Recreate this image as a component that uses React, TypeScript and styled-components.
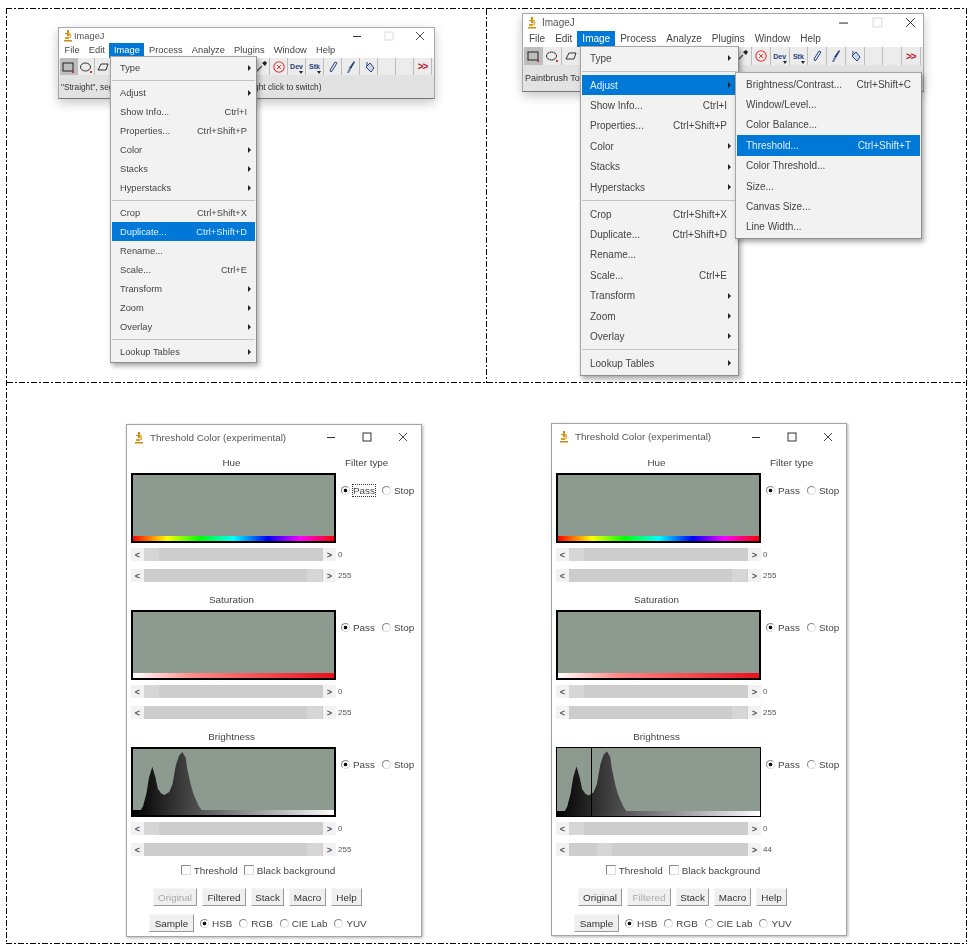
import React from 'react'
import styled, { createGlobalStyle, css } from 'styled-components'

const GlobalStyle = createGlobalStyle`
  html, body {
    margin: 0;
    padding: 0;
    background: #fff;
  }
  body {
    font-family: "Liberation Sans", Arial, sans-serif;
    color: #333;
  }
`

const dashH = 'repeating-linear-gradient(90deg,#000 0 6px,transparent 6px 8px,#000 8px 10px,transparent 10px 12px)'
const dashV = 'repeating-linear-gradient(180deg,#000 0 6px,transparent 6px 8px,#000 8px 10px,transparent 10px 12px)'

// dash-dot rules, the scanned table borders are not plain css dashes
const ruleBottom = css`
  background-image: ${dashH};
  background-size: 100% 1px;
  background-position: left bottom;
  background-repeat: no-repeat;
`

const Page = styled.div`
  width: 976px;
  height: 946px;
  padding: 8px 0 0 6px;
  box-sizing: border-box;
  overflow: hidden;
`
const Sheet = styled.div`
  width: 961px;
  height: 936px;
  box-sizing: border-box;
  padding: 1px;
  background-image: ${dashH}, ${dashH}, ${dashV}, ${dashV};
  background-size: 100% 1px, 100% 1px, 1px 100%, 1px 100%;
  background-position: left top, left bottom, left top, right top;
  background-repeat: no-repeat;
  display: grid;
  grid-template-columns: 480px 1fr;
  grid-template-rows: 374px 1fr;
`
const TopCell = styled.div<{ $left: number; $top: number; $divider?: boolean }>`
  padding: ${p => p.$top}px 0 0 ${p => p.$left}px;
  ${ruleBottom}
  ${p =>
    p.$divider &&
    css`
      background-image: ${dashH}, ${dashV};
      background-size: 100% 1px, 1px 100%;
      background-position: left bottom, right top;
    `}
`
const BottomCell = styled.div`
  grid-column: 1 / 3;
  display: flex;
  align-items: flex-start;
  gap: 129px;
  padding: 40px 0 0 119px;
`

/* ImageJ main window */
const MainWindow = styled.div<{ $w: number; $h: number; $font: number }>`
  position: relative;
  width: ${p => p.$w}px;
  height: ${p => p.$h}px;
  font-size: ${p => p.$font}px;
  box-sizing: border-box;
  background: #fff;
  border: 1px solid #a8a8a8;
  border-bottom-color: #777;
  box-shadow: 0 4px 10px rgba(0, 0, 0, 0.22);
  display: flex;
  flex-direction: column;
  filter: blur(0.3px);
`
const TitleBar = styled.div<{ $h: number; $gap: number }>`
  height: ${p => p.$h}px;
  flex: none;
  display: flex;
  align-items: center;
  padding-left: 3px;
  gap: ${p => p.$gap}px;
  color: #555;
`
const TitleText = styled.span`
  flex: 1;
`
const WinControls = styled.div<{ $w: number; $pad: number }>`
  width: ${p => p.$w}px;
  box-sizing: border-box;
  display: flex;
  justify-content: space-between;
  align-items: center;
  padding-right: ${p => p.$pad}px;
  flex: none;
`
const MenuBar = styled.div<{ $h: number; $pad: number }>`
  height: ${p => p.$h}px;
  flex: none;
  display: flex;
  align-items: center;
  padding-left: 1px;
  & > span {
    padding: 0 ${p => p.$pad}px;
    line-height: ${p => p.$h}px;
  }
`
const MenuTitle = styled.span<{ $active?: boolean }>`
  background: ${p => (p.$active ? '#0078d7' : 'transparent')};
  color: ${p => (p.$active ? '#fff' : '#444')};
`
const Toolbar = styled.div<{ $h: number }>`
  height: ${p => p.$h}px;
  flex: none;
  background: #eaeaea;
  display: flex;
  padding-left: 1px;
`
const ToolButton = styled.div<{ $w: number; $pressed?: boolean }>`
  position: relative;
  width: ${p => p.$w}px;
  box-sizing: border-box;
  flex: none;
  background: ${p => (p.$pressed ? '#bdbdbd' : '#ececec')};
  border-right: 1px solid #bcbcbc;
  display: flex;
  align-items: center;
  justify-content: center;
  font-size: 7px;
  font-weight: bold;
  color: #26407c;
`
const DropMark = styled.i`
  position: absolute;
  right: 2px;
  bottom: 1px;
  border-top: 3px solid #222;
  border-left: 2px solid transparent;
  border-right: 2px solid transparent;
`
const ExpandMark = styled.span`
  color: #c0202a;
  font-size: 10px;
  letter-spacing: -1px;
`
const StatusBar = styled.div<{ $font: number }>`
  flex: 1;
  background: #e2e2e2;
  display: flex;
  align-items: center;
  padding-left: 2px;
  font-size: ${p => p.$font}px;
  color: #333;
  white-space: nowrap;
  overflow: hidden;
`

/* Drop-down menus */
const Menu = styled.div<{ $x: number; $y: number; $w: number }>`
  position: absolute;
  left: ${p => p.$x}px;
  top: ${p => p.$y}px;
  width: ${p => p.$w}px;
  box-sizing: border-box;
  padding: 1px;
  background: #f2f2f2;
  border: 1px solid #a6a6a6;
  border-right-color: #8c8c8c;
  border-bottom-color: #8c8c8c;
  box-shadow: 2px 3px 5px rgba(0, 0, 0, 0.35);
  z-index: 2;
`
const MenuRow = styled.div<{ $h: number; $active?: boolean; $inset: number; $lead: number }>`
  height: ${p => p.$h}px;
  display: flex;
  align-items: center;
  justify-content: space-between;
  padding: 0 ${p => p.$inset}px 0 ${p => p.$lead}px;
  background: ${p => (p.$active ? '#0078d7' : 'transparent')};
  color: ${p => (p.$active ? '#dff0ff' : '#444')};
  white-space: nowrap;
`
const MenuSep = styled.div<{ $h: number }>`
  height: ${p => p.$h}px;
  display: flex;
  align-items: center;
  &::before {
    content: '';
    flex: 1;
    height: 1px;
    background: #c4c4c4;
  }
`
const Arrow = styled.span`
  width: 0;
  height: 0;
  margin-right: -4px;
  border-left: 3px solid #222;
  border-top: 3px solid transparent;
  border-bottom: 3px solid transparent;
`

/* Threshold Color window */
const ThresholdWin = styled.div<{ $mt?: number }>`
  width: 296px;
  height: 513px;
  margin-top: ${p => p.$mt || 0}px;
  box-sizing: border-box;
  padding: 0 0 0 4px;
  flex: none;
  background: #fff;
  border: 1px solid #a4a4a4;
  box-shadow: 1px 1px 3px rgba(0, 0, 0, 0.3);
  font-size: 9.9px;
  color: #444;
  filter: blur(0.3px);
`
const ThresholdTitle = styled.div<{ $h: number }>`
  height: ${p => p.$h}px;
  display: flex;
  align-items: center;
  gap: 6px;
  padding-left: 2px;
  font-size: 9.9px;
  color: #555;
`
const Section = styled.section`
  display: grid;
  grid-template-columns: 205px 1fr;
  margin-bottom: 9px;
  &:first-of-type {
    padding-top: 5px;
  }
`
const Caption = styled.div`
  height: 19px;
  line-height: 18px;
  text-align: center;
  padding-right: 4px;
  box-sizing: border-box;
`
const FilterLabel = styled(Caption)`
  text-align: left;
  padding: 0 0 0 9px;
`
const RadioColumn = styled.div`
  grid-row: 2;
  grid-column: 2;
  padding: 10px 0 0 5px;
  display: flex;
  gap: 7px;
  height: 14px;
  align-items: center;
`
const Controls = styled.div`
  grid-column: 1;
`
const Plot = styled.div<{ $thin?: boolean }>`
  position: relative;
  height: 70px;
  box-sizing: border-box;
  border: ${p => (p.$thin ? '1px' : '2px')} solid #000;
  background: #8d9a8f;
  display: flex;
  flex-direction: column;
  justify-content: flex-end;
`
const Ramp = styled.div<{ $ramp: string }>`
  height: 5px;
  background: ${p => p.$ramp};
`
const HistogramSvg = styled.svg`
  position: absolute;
  left: 0;
  top: 0;
  width: 100%;
  height: calc(100% - 5px);
`
const Cursor = styled.div`
  position: absolute;
  top: 0;
  bottom: 0;
  left: 34px;
  width: 1px;
  background: #000;
`
const ScrollRow = styled.div`
  position: relative;
  height: 13px;
  margin-top: 8px;
  display: flex;
  align-items: center;
  background: #f2f2f2;
  color: #555;
  font-size: 9px;
  ${Plot} + & {
    margin-top: 5px;
  }
`
const ScrollArrow = styled.span`
  width: 13px;
  flex: none;
  text-align: center;
  font-size: 9px;
  font-weight: bold;
`
const Track = styled.div`
  position: relative;
  flex: 1;
  height: 100%;
  background: #cdcdcd;
`
const Thumb = styled.div`
  position: absolute;
  top: 0;
  bottom: 0;
  background: #d6d6d6;
`
const ScrollValue = styled.span`
  position: absolute;
  left: 207px;
  top: 2px;
  font-size: 8px;
`
const RadioLabel = styled.label<{ $focus?: boolean }>`
  display: inline-flex;
  align-items: center;
  gap: 3px;
  white-space: nowrap;
  & > span {
    outline: ${p => (p.$focus ? '1px dotted #333' : 'none')};
  }
`
const RadioDot = styled.i<{ $on?: boolean }>`
  width: 9px;
  height: 9px;
  box-sizing: border-box;
  border-radius: 50%;
  border: 1px solid #dcdcdc;
  border-top-color: #8a8a8a;
  border-left-color: #8a8a8a;
  background: ${p => (p.$on ? 'radial-gradient(circle, #111 0 1.5px, #fff 2.2px)' : '#fff')};
  flex: none;
`
const CheckRow = styled.div`
  height: 14px;
  display: flex;
  justify-content: center;
  align-items: center;
  gap: 6px;
  margin-top: -2px;
  padding-right: 36px;
`
const CheckLabel = styled.label`
  display: inline-flex;
  align-items: center;
  gap: 3px;
`
const CheckBox = styled.i`
  width: 10px;
  height: 10px;
  box-sizing: border-box;
  background: #fff;
  border: 1px solid #8a8a8a;
  border-right-color: #ddd;
  border-bottom-color: #ddd;
`
const ButtonRow = styled.div`
  display: flex;
  gap: 5px;
  margin-top: 11px;
  padding-left: 22px;
`
const ActionButton = styled.button<{ $w: number; $off?: boolean }>`
  width: ${p => p.$w}px;
  height: 18px;
  padding: 0;
  font: inherit;
  color: ${p => (p.$off ? '#aaa' : '#333')};
  background: #efefef;
  border: 1px solid #f6f6f6;
  border-right-color: #999;
  border-bottom-color: #999;
`
const SampleRow = styled.div`
  display: flex;
  align-items: center;
  gap: 6px;
  margin-top: 8px;
  padding-left: 18px;
`
const ColorModes = styled.div`
  display: flex;
  gap: 7px;
`

const Logo = () => (
  <svg width="11" height="13" viewBox="0 0 11 13">
    <path d="M5 1h2v6H5zM3 4h2v1H3zM2 11h8v1.5H2z" fill="#c98a1a" />
    <path d="M7 3c2 1 3 3 2 6H7c1-2 0-4-1-5z" fill="#e8b84a" />
    <path d="M3 8h4v2H3z" fill="#e39a22" />
  </svg>
)

const WinIcons = ({ dim, size }: { dim?: boolean; size: number }) => (
  <>
    <svg width={size} height={size} viewBox="0 0 10 10"><path d="M1 5.5h8" stroke="#333" strokeWidth="1" /></svg>
    <svg width={size} height={size} viewBox="0 0 10 10"><rect x="1" y="1" width="8" height="8" fill="none" stroke={dim ? '#ddd' : '#333'} /></svg>
    <svg width={size} height={size} viewBox="0 0 10 10"><path d="M1 1l8 8M9 1l-8 8" stroke="#333" strokeWidth="0.9" /></svg>
  </>
)

const iconFor = (i: number): React.ReactNode => {
  switch (i) {
    case 0:
      return <svg width="14" height="14" viewBox="0 0 14 14"><rect x="2" y="3" width="10" height="8" fill="none" stroke="#222" /><rect x="11" y="11" width="2" height="2" fill="#c33" /></svg>
    case 1:
      return <svg width="14" height="14" viewBox="0 0 14 14"><ellipse cx="6.5" cy="7" rx="5" ry="4" fill="none" stroke="#333" /><rect x="11" y="11" width="2" height="2" fill="#c33" /></svg>
    case 2:
      return <svg width="14" height="14" viewBox="0 0 14 14"><path d="M2 10l3-6h7l-2 6z" fill="none" stroke="#333" /></svg>
    case 11:
      return <svg width="14" height="14" viewBox="0 0 14 14"><path d="M2 12l6-6" stroke="#555" strokeWidth="1.5" /><path d="M8 3l3 3 2-3-2-2z" fill="#222" /></svg>
    case 12:
      return <svg width="14" height="14" viewBox="0 0 14 14"><circle cx="7" cy="7" r="5.2" fill="#fbe9e9" stroke="#d2413c" strokeWidth="1.1" /><path d="M5 5l4 4M9 5l-4 4" stroke="#d2413c" /></svg>
    case 13:
      return <>Dev<DropMark /></>
    case 14:
      return <>Stk<DropMark /></>
    case 15:
      return <svg width="14" height="14" viewBox="0 0 14 14"><path d="M5 12l-1-2 5-8 2 1-5 8z" fill="#dfe8f5" stroke="#26407c" /></svg>
    case 16:
      return <svg width="14" height="14" viewBox="0 0 14 14"><path d="M10 1l1 1-4 7-2-1z" fill="#26407c" /><path d="M5 8l2 1-2 4-2 0z" fill="#6b7fa8" /></svg>
    case 17:
      return <svg width="14" height="14" viewBox="0 0 14 14"><path d="M4 7l4-4 4 5-3 4z" fill="#cdd8ec" stroke="#26407c" /><path d="M5 2v4" stroke="#26407c" /></svg>
    case 20:
      return <ExpandMark>&gt;&gt;</ExpandMark>
    default:
      return null
  }
}

type Entry = { label?: string; keys?: string; more?: boolean; active?: boolean }

const imageMenu = (activeLabel: string): Entry[] =>
  [
    { label: 'Type', more: true },
    {},
    { label: 'Adjust', more: true },
    { label: 'Show Info...', keys: 'Ctrl+I' },
    { label: 'Properties...', keys: 'Ctrl+Shift+P' },
    { label: 'Color', more: true },
    { label: 'Stacks', more: true },
    { label: 'Hyperstacks', more: true },
    {},
    { label: 'Crop', keys: 'Ctrl+Shift+X' },
    { label: 'Duplicate...', keys: 'Ctrl+Shift+D' },
    { label: 'Rename...' },
    { label: 'Scale...', keys: 'Ctrl+E' },
    { label: 'Transform', more: true },
    { label: 'Zoom', more: true },
    { label: 'Overlay', more: true },
    {},
    { label: 'Lookup Tables', more: true },
  ].map(e => ({ ...e, active: e.label === activeLabel }))

const adjustMenu: Entry[] = [
  { label: 'Brightness/Contrast...', keys: 'Ctrl+Shift+C' },
  { label: 'Window/Level...' },
  { label: 'Color Balance...' },
  { label: 'Threshold...', keys: 'Ctrl+Shift+T', active: true },
  { label: 'Color Threshold...' },
  { label: 'Size...' },
  { label: 'Canvas Size...' },
  { label: 'Line Width...' },
]

const DropMenu = ({ entries, x, y, w, row, sep, inset, lead = 8 }: { entries: Entry[]; x: number; y: number; w: number; row: number; sep: number; inset: number; lead?: number }) => (
  <Menu $x={x} $y={y} $w={w}>
    {entries.map((e, i) =>
      e.label ? (
        <MenuRow key={i} $h={row} $active={e.active} $inset={inset} $lead={lead}>
          <span>{e.label}</span>
          {e.keys && <span>{e.keys}</span>}
          {e.more && <Arrow />}
        </MenuRow>
      ) : (
        <MenuSep key={i} $h={sep} />
      ),
    )}
  </Menu>
)

const menuNames = ['File', 'Edit', 'Image', 'Process', 'Analyze', 'Plugins', 'Window', 'Help']

const ImageJWindow = ({ big, status, children }: { big?: boolean; status: string; children: React.ReactNode }) => {
  // the first twelve buttons are a little narrower than the ones after the dropper
  const toolWidth = (i: number) => (big ? (i < 12 ? 19 : 18.75) : i < 12 ? 17.5 : 18)
  return (
    <MainWindow $w={big ? 402 : 377} $h={big ? 79 : 72} $font={big ? 10 : 9.3}>
      <TitleBar $h={big ? 17 : 15} $gap={big ? 5 : 1}>
        <Logo />
        <TitleText>ImageJ</TitleText>
        <WinControls $w={big ? 85 : 82} $pad={big ? 7 : 9}>
          <WinIcons dim size={big ? 11 : 10} />
        </WinControls>
      </TitleBar>
      <MenuBar $h={big ? 16 : 15} $pad={big ? 5 : 4.6}>
        {menuNames.map(n => (
          <MenuTitle key={n} $active={n === 'Image'}>{n}</MenuTitle>
        ))}
      </MenuBar>
      <Toolbar $h={big ? 18 : 17}>
        {Array.from({ length: 21 }, (_, i) => (
          <ToolButton key={i} $w={toolWidth(i)} $pressed={i === 0}>{iconFor(i)}</ToolButton>
        ))}
      </Toolbar>
      <StatusBar $font={big ? 9 : 8.3}>{status}</StatusBar>
      {children}
    </MainWindow>
  )
}

const Scroll = ({ value, thumbAt }: { value: string; thumbAt: number }) => (
  <ScrollRow>
    <ScrollArrow>&lt;</ScrollArrow>
    <Track>
      <Thumb style={{ left: thumbAt, width: 15 }} />
    </Track>
    <ScrollArrow>&gt;</ScrollArrow>
    <ScrollValue>{value}</ScrollValue>
  </ScrollRow>
)

const Filter = ({ focus }: { focus?: boolean }) => (
  <RadioColumn>
    <RadioLabel $focus={focus}><RadioDot $on /><span>Pass</span></RadioLabel>
    <RadioLabel><RadioDot /><span>Stop</span></RadioLabel>
  </RadioColumn>
)

const histogramPath = 'M10.3 60.7L13.7 47.3L16.3 30.7L19.7 19L23 30.7L25.3 42.3L28.7 47.3L32 49L37 45.7L40.3 37.3L43.7 17.3L47 7.3L50.3 3.3L53.7 9L55.3 20.7L58.7 37.3L62 49L67 60.7L70 65L8 65Z'

const hueRamp = 'linear-gradient(90deg,#f00,#ff0 17%,#0f0 33%,#0ff 50%,#00f 67%,#f0f 83%,#f00)'

const ThresholdWindow = ({ mt, titleH, focus, high, thumbHigh, cursor, off }: { mt?: number; titleH: number; focus?: boolean; high: string; thumbHigh: number; cursor?: boolean; off: string }) => (
  <ThresholdWin $mt={mt}>
    <ThresholdTitle $h={titleH}>
      <Logo />
      <TitleText>Threshold Color (experimental)</TitleText>
      <WinControls $w={95} $pad={13}>
        <WinIcons size={10} />
      </WinControls>
    </ThresholdTitle>
    <Section>
      <Caption>Hue</Caption>
      <FilterLabel>Filter type</FilterLabel>
      <Controls>
        <Plot><Ramp $ramp={hueRamp} /></Plot>
        <Scroll value="0" thumbAt={0} />
        <Scroll value="255" thumbAt={163} />
      </Controls>
      <Filter focus={focus} />
    </Section>
    <Section>
      <Caption>Saturation</Caption>
      <div />
      <Controls>
        <Plot><Ramp $ramp="linear-gradient(90deg,#fff,#f88 30%,#e8101c)" /></Plot>
        <Scroll value="0" thumbAt={0} />
        <Scroll value="255" thumbAt={163} />
      </Controls>
      <Filter />
    </Section>
    <Section>
      <Caption>Brightness</Caption>
      <div />
      <Controls>
        <Plot $thin={cursor}>
          <HistogramSvg viewBox="0 0 205 65" preserveAspectRatio="none">
            <defs>
              <linearGradient id={cursor ? 'histB' : 'histA'} x1="0" x2="72" y1="0" y2="0" gradientUnits="userSpaceOnUse">
                <stop offset="0" stopColor="#000" />
                <stop offset="1" stopColor="#555" />
              </linearGradient>
            </defs>
            <path d={histogramPath} fill={`url(#${cursor ? 'histB' : 'histA'})`} />
          </HistogramSvg>
          {cursor && <Cursor />}
          <Ramp $ramp="linear-gradient(90deg,#000,#fff)" />
        </Plot>
        <Scroll value="0" thumbAt={0} />
        <Scroll value={high} thumbAt={thumbHigh} />
      </Controls>
      <Filter />
    </Section>
    <CheckRow>
      <CheckLabel><CheckBox />Threshold</CheckLabel>
      <CheckLabel><CheckBox />Black background</CheckLabel>
    </CheckRow>
    <ButtonRow>
      <ActionButton $w={44} $off={off === 'Original'}>Original</ActionButton>
      <ActionButton $w={44} $off={off === 'Filtered'}>Filtered</ActionButton>
      <ActionButton $w={33}>Stack</ActionButton>
      <ActionButton $w={37}>Macro</ActionButton>
      <ActionButton $w={31}>Help</ActionButton>
    </ButtonRow>
    <SampleRow>
      <ActionButton $w={45}>Sample</ActionButton>
      <ColorModes>
        <RadioLabel><RadioDot $on /><span>HSB</span></RadioLabel>
        <RadioLabel><RadioDot /><span>RGB</span></RadioLabel>
        <RadioLabel><RadioDot /><span>CIE Lab</span></RadioLabel>
        <RadioLabel><RadioDot /><span>YUV</span></RadioLabel>
      </ColorModes>
    </SampleRow>
  </ThresholdWin>
)

export default function App() {
  return (
    <Page>
      <GlobalStyle />
      <Sheet>
        <TopCell $left={51} $top={18} $divider>
          <ImageJWindow status={'"Straight", segmented or freehand lines, or arrows (right click to switch)'}>
            <DropMenu entries={imageMenu('Duplicate...')} x={51} y={28} w={147} row={19} sep={6} inset={8} />
          </ImageJWindow>
        </TopCell>
        <TopCell $left={35} $top={4}>
          <ImageJWindow big status="Paintbrush Tool">
            <DropMenu entries={imageMenu('Adjust')} x={57} y={32} w={159} row={20.4} sep={6.6} inset={10} />
            <DropMenu entries={adjustMenu} x={212} y={58} w={187} row={20.4} sep={6.6} inset={9} lead={9} />
          </ImageJWindow>
        </TopCell>
        <BottomCell>
          <ThresholdWindow mt={1} titleH={24} focus high="255" thumbHigh={163} off="Original" />
          <ThresholdWindow titleH={25} high="44" thumbHigh={28} cursor off="Filtered" />
        </BottomCell>
      </Sheet>
    </Page>
  )
}
